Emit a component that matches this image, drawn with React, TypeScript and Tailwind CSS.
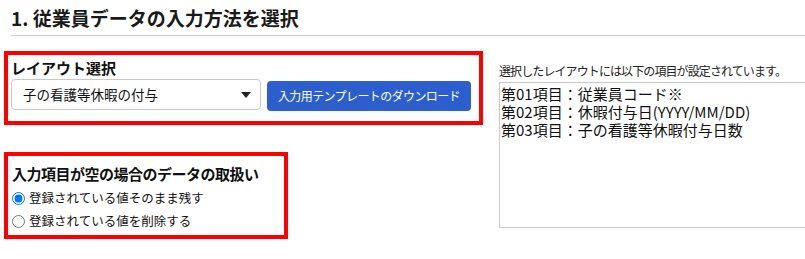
const FONT = { fontFamily: '"Noto Sans CJK JP", "Noto Sans", sans-serif' }

const FIELDS = [
  '第01項目：従業員コード※',
  '第02項目：休暇付与日(YYYY/MM/DD)',
  '第03項目：子の看護等休暇付与日数',
]

function LayoutSelect() {
  return (
    <div className="border-4 border-[#ff0000] h-[74px] pl-[3px] pt-[3px]">
      <div className="text-[15px] font-bold leading-[20px] text-[#111]">レイアウト選択</div>
      <div className="flex items-start gap-[6px] mt-[1px]">
        <div className="w-[250px] h-[31px] border border-[#c8c8c8] rounded-[4px] bg-white flex items-center justify-between pl-[11px] pr-[9px] text-[13.5px] text-[#111]">
          <span>子の看護等休暇の付与</span>
          <svg width="10" height="6" viewBox="0 0 10 6"><path d="M0 0h10L5 6z" fill="#222" /></svg>
        </div>
        <button className="mt-[2px] w-[204px] h-[30px] rounded-[4px] bg-[#2c5fcd] text-white text-[12px] tracking-[-0.6px] whitespace-nowrap">
          入力用テンプレートのダウンロード
        </button>
      </div>
    </div>
  )
}

function EmptyHandling() {
  return (
    <div className="border-4 border-[#ff0000] w-[284px] h-[87px] pl-[4px] pt-[8px] mt-[27px]">
      <div className="text-[15px] font-bold leading-[20px] tracking-[-0.5px] text-[#111] whitespace-nowrap">
        入力項目が空の場合のデータの取扱い
      </div>
      <label className="flex items-center gap-[4px] mt-[4px] text-[12.5px] leading-[20px] text-[#111]">
        <input type="radio" name="empty" defaultChecked className="m-0 w-[13px] h-[13px] accent-[#0075ff]" />
        登録されている値そのまま残す
      </label>
      <label className="flex items-center gap-[4px] mt-[3px] text-[12.5px] leading-[20px] text-[#111]">
        <input type="radio" name="empty" className="m-0 w-[13px] h-[13px]" />
        登録されている値を削除する
      </label>
    </div>
  )
}

export default function App() {
  return (
    <div className="w-[805px] h-[259px] overflow-hidden bg-white text-[#111]" style={FONT}>
      <div className="ml-[11px] pt-[6px] pb-[6px] border-b border-[#cccccc] text-[19px] font-bold leading-[23px] text-[#1a1a1a]">
        1. 従業員データの入力方法を選択
      </div>
      <div className="flex mt-[15px]">
        <div className="ml-[4px] w-[479px] shrink-0">
          <LayoutSelect />
          <EmptyHandling />
        </div>
        <div className="ml-[16px] pt-[8px] shrink-0">
          <div className="text-[12px] leading-[23px] tracking-[-0.9px] text-[#222] whitespace-nowrap">
            選択したレイアウトには以下の項目が設定されています。
          </div>
          <div className="w-[330px] h-[146px] border border-[#c8c8c8] px-[1px] pt-[2px] text-[15px] leading-[18px] text-[#111]">
            {FIELDS.map((f) => (
              <div key={f} className="whitespace-nowrap">{f}</div>
            ))}
          </div>
        </div>
      </div>
    </div>
  )
}
